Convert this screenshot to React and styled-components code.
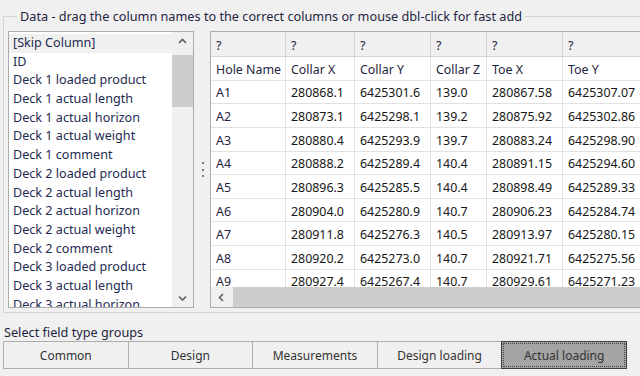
import React from "react";
import styled, { createGlobalStyle } from "styled-components";

const GlobalStyle = createGlobalStyle`
  html, body { margin: 0; padding: 0; background: #f0f0f0; }
  body { font-family: "Noto Sans", "Open Sans", sans-serif; font-size: 12px; color: #1e2540; }
  * { box-sizing: border-box; }
`;

const Root = styled.div`
  width: 640px;
  height: 376px;
  overflow: hidden;
  background: #f0f0f0;
`;

const GroupBox = styled.fieldset`
  margin: 8px 0 0 3px;
  width: 700px;
  padding: 7px 0 4px 4px;
  border: 1px solid #d5d5d5;
  min-width: 0;
`;

const Legend = styled.legend`
  margin-left: 9px;
  padding: 0 3px;
  line-height: 16px;
  font-size: 12.7px;
  color: #1e2540;
`;

const Content = styled.div`
  display: flex;
  height: 277px;
`;

const ListBox = styled.div`
  width: 186px;
  flex: none;
  border: 1px solid #acacac;
  background: #fff;
  display: flex;
  overflow: hidden;
`;

const Items = styled.div`
  flex: 1;
  overflow: hidden;
  padding-top: 2px;
`;

const Item = styled.div`
  height: 18.7px;
  line-height: 18.7px;
  padding-left: 4px;
  font-size: 12.6px;
  white-space: nowrap;
  color: #1e2a50;
  background: ${(p) => (p.$selected ? "#f0f0f0" : "transparent")};
`;

const VScroll = styled.div`
  width: 21px;
  flex: none;
  background: #f0f0f0;
  display: flex;
  flex-direction: column;
`;

const ArrowBtn = styled.div`
  height: ${(p) => p.$h || 18}px;
  width: ${(p) => p.$w || 21}px;
  flex: none;
  display: flex;
  align-items: center;
  justify-content: center;
  background: #f0f0f0;
`;

const VThumb = styled.div`
  height: 52px;
  margin-top: 5px;
  background: #cdcdcd;
`;

const Spacer = styled.div`
  flex: 1;
`;

const Splitter = styled.div`
  width: 16px;
  flex: none;
  display: flex;
  flex-direction: column;
  align-items: center;
  justify-content: center;
  gap: 4.5px;
  padding: 0 0 0 1px;
`;

const Dot = styled.span`
  width: 2px;
  height: 2px;
  background: #7a7a7a;
`;

const Grid = styled.div`
  flex: 1;
  border: 1px solid #acacac;
  border-right: none;
  background: #fff;
  display: flex;
  flex-direction: column;
  overflow: hidden;
`;

const Rows = styled.div`
  flex: 1;
  overflow: hidden;
`;

const Row = styled.div`
  display: flex;
  height: ${(p) => (p.$head ? 25 : 23.63)}px;
  border-bottom: 1px solid ${(p) => (p.$head ? "#d4d4d4" : "#e2e2e2")};
  background: ${(p) => (p.$head ? "#f0f0f0" : "#fff")};
`;

const Cell = styled.div`
  flex: none;
  display: flex;
  align-items: center;
  padding: 2px 0 0 5px;
  border-right: 1px solid ${(p) => (p.$head ? "#d4d4d4" : "#e2e2e2")};
  white-space: nowrap;
  overflow: hidden;
  font-size: 12.4px;
  color: ${(p) => (p.$num ? "#161616" : "#1e2540")};
`;

const HScroll = styled.div`
  height: 20px;
  flex: none;
  display: flex;
  background: #f0f0f0;
`;

const HThumb = styled.div`
  flex: 1;
  margin-left: 1px;
  background: #cdcdcd;
`;

const GroupsLabel = styled.div`
  margin: 11px 0 0 4px;
  line-height: 16px;
  font-size: 12.7px;
  color: #1e2540;
`;

const ButtonRow = styled.div`
  display: flex;
  margin: 1px 0 0 3px;
  width: 624px;
`;

const GroupButton = styled.button`
  flex: 1;
  height: 28px;
  font-family: inherit;
  font-size: 12px;
  color: #333;
  background: ${(p) => (p.$active ? "#a4a4a4" : "#f0f0f0")};
  border: 1px solid ${(p) => (p.$active ? "#3c3c3c" : "#adadad")};
  margin-left: -1px;
  padding: 0;
  outline: ${(p) => (p.$active ? "1px dotted #444" : "none")};
  outline-offset: -3px;
  &:first-child { margin-left: 0; }
`;

const Chevron = ({ dir }) => {
  const paths = {
    up: "M1 5 L4.5 1.5 L8 5",
    down: "M1 1.5 L4.5 5 L8 1.5",
    left: "M5 1 L1.5 4.5 L5 8",
  };
  const vertical = dir !== "left";
  return (
    <svg width={vertical ? 9 : 7} height={vertical ? 7 : 9} viewBox={vertical ? "0 0 9 7" : "0 0 7 9"}>
      <path d={paths[dir]} fill="none" stroke="#606060" strokeWidth="1.6" />
    </svg>
  );
};

const listItems = [
  "[Skip Column]",
  "ID",
  "Deck 1 loaded product",
  "Deck 1 actual length",
  "Deck 1 actual horizon",
  "Deck 1 actual weight",
  "Deck 1 comment",
  "Deck 2 loaded product",
  "Deck 2 actual length",
  "Deck 2 actual horizon",
  "Deck 2 actual weight",
  "Deck 2 comment",
  "Deck 3 loaded product",
  "Deck 3 actual length",
  "Deck 3 actual horizon",
];

const colWidths = [75, 69, 76, 56, 76, 90, 80];
const headers = ["Hole Name", "Collar X", "Collar Y", "Collar Z", "Toe X", "Toe Y", "Toe Z"];
const rows = [
  ["A1", "280868.1", "6425301.6", "139.0", "280867.58", "6425307.07", "127.4"],
  ["A2", "280873.1", "6425298.1", "139.2", "280875.92", "6425302.86", "127.6"],
  ["A3", "280880.4", "6425293.9", "139.7", "280883.24", "6425298.90", "128.1"],
  ["A4", "280888.2", "6425289.4", "140.4", "280891.15", "6425294.60", "128.8"],
  ["A5", "280896.3", "6425285.5", "140.4", "280898.49", "6425289.33", "128.8"],
  ["A6", "280904.0", "6425280.9", "140.7", "280906.23", "6425284.74", "129.1"],
  ["A7", "280911.8", "6425276.3", "140.5", "280913.97", "6425280.15", "128.9"],
  ["A8", "280920.2", "6425273.0", "140.7", "280921.71", "6425275.56", "129.1"],
  ["A9", "280927.4", "6425267.4", "140.7", "280929.61", "6425271.23", "129.1"],
];

const groups = ["Common", "Design", "Measurements", "Design loading", "Actual loading"];

export default function App() {
  return (
    <Root>
      <GlobalStyle />
      <GroupBox>
        <Legend>Data - drag the column names to the correct columns or mouse dbl-click for fast add</Legend>
        <Content>
          <ListBox>
            <Items>
              {listItems.map((t, i) => (
                <Item key={t} $selected={i === 0}>{t}</Item>
              ))}
            </Items>
            <VScroll>
              <ArrowBtn><Chevron dir="up" /></ArrowBtn>
              <VThumb />
              <Spacer />
              <ArrowBtn><Chevron dir="down" /></ArrowBtn>
            </VScroll>
          </ListBox>
          <Splitter>
            <Dot /><Dot /><Dot />
          </Splitter>
          <Grid>
            <Rows>
              <Row $head>
                {colWidths.map((w, i) => (
                  <Cell key={i} $head style={{ width: w }}>?</Cell>
                ))}
              </Row>
              <Row>
                {headers.map((h, i) => (
                  <Cell key={h} style={{ width: colWidths[i] }}>{h}</Cell>
                ))}
              </Row>
              {rows.map((r) => (
                <Row key={r[0]}>
                  {r.map((v, i) => (
                    <Cell key={i} $num={i > 0} style={{ width: colWidths[i] }}>{v}</Cell>
                  ))}
                </Row>
              ))}
            </Rows>
            <HScroll>
              <ArrowBtn $h={20}><Chevron dir="left" /></ArrowBtn>
              <HThumb />
            </HScroll>
          </Grid>
        </Content>
      </GroupBox>
      <GroupsLabel>Select field type groups</GroupsLabel>
      <ButtonRow>
        {groups.map((g, i) => (
          <GroupButton key={g} $active={i === 4}>{g}</GroupButton>
        ))}
      </ButtonRow>
    </Root>
  );
}
